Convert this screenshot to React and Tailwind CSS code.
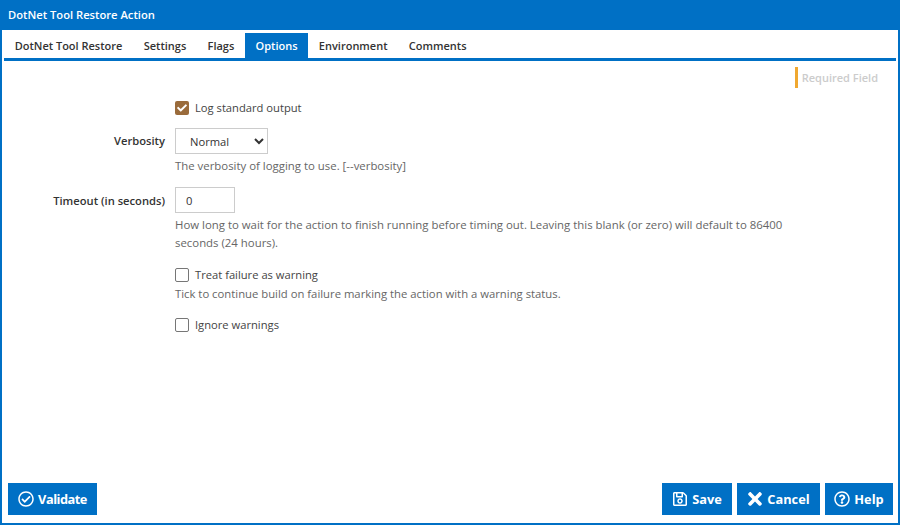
import { FaCheck, FaRegCheckCircle, FaRegQuestionCircle, FaRegSave, FaTimes } from "react-icons/fa";

const tabs = ["DotNet Tool Restore", "Settings", "Flags", "Options", "Environment", "Comments"];

function Check({ checked, children }) {
  return (
    <label className="flex items-center gap-[6px] h-[18px] text-[#444]">
      <span
        className={
          checked
            ? "w-[14px] h-[14px] rounded-[2px] bg-[#9a6b3b] flex items-center justify-center text-white"
            : "w-[14px] h-[14px] rounded-[2px] border border-[#767676] bg-white"
        }
      >
        {checked && <FaCheck className="w-[10px] h-[10px]" />}
      </span>
      {children}
    </label>
  );
}

function Button({ icon, className, children }) {
  return (
    <button className={`h-[32px] bg-[#0070c5] text-white text-[12.8px] font-bold flex items-center justify-center gap-[4px] ${className}`}>
      {icon}
      {children}
    </button>
  );
}

export default function App() {
  return (
    <div className="w-[900px] h-[525px] flex flex-col bg-white overflow-hidden border-x-[2px] border-b-[2px] border-[#0070c5] text-[11.2px] leading-[18px] font-['Open_Sans',sans-serif]">
      {/* Title bar */}
      <div className="h-[30px] -mx-[2px] px-[8px] pb-[1px] shrink-0 flex items-center bg-[#0070c5] text-white font-semibold">
        DotNet Tool Restore Action
      </div>

      {/* Tabs */}
      <div className="mt-[3px] mx-[2px] h-[28px] shrink-0 flex border-b-[3px] border-[#0070c5] text-[11px]">
        {tabs.map((tab) => (
          <div
            key={tab}
            className={
              tab === "Options"
                ? "px-[10.65px] flex items-center font-semibold bg-[#0070c5] text-white"
                : "px-[10.65px] flex items-center font-semibold text-[#333]"
            }
          >
            {tab}
          </div>
        ))}
      </div>

      {/* Required marker */}
      <div className="mt-[6px] mr-[20px] h-[21px] shrink-0 self-end flex items-center border-l-[3px] border-[#f0a830] pl-[4px] text-[11px] text-[#ccc] font-semibold">
        Required Field
      </div>

      {/* Form */}
      <div className="flex-1 mt-[11px] grid grid-cols-[163px_620px] gap-x-[10px] content-start">
        <div />
        <Check checked>Log standard output</Check>

        <div className="mt-[11px] h-[26px] flex items-center justify-end font-semibold text-[#333]">Verbosity</div>
        <div className="mt-[11px]">
          <select className="block w-[93px] h-[26px] pl-[10px] bg-white border border-[#ccc] text-[#333]">
            <option>Normal</option>
          </select>
          <p className="mt-[3px] text-[11.4px] text-[#666]">The verbosity of logging to use. [--verbosity]</p>
        </div>

        <div className="mt-[13px] h-[26px] flex items-center justify-end font-semibold text-[#333]">Timeout (in seconds)</div>
        <div className="mt-[12px]">
          <input
            readOnly
            value="0"
            className="block w-[60px] h-[26px] px-[10px] border border-[#ccc] text-[#333]"
          />
          <p className="mt-[3px] text-[11.4px] text-[#666]">
            How long to wait for the action to finish running before timing out. Leaving this blank (or zero) will default to 86400 seconds (24 hours).
          </p>
        </div>

        <div />
        <div className="mt-[14px]">
          <Check>Treat failure as warning</Check>
          <p className="mt-[1px] text-[11.3px] text-[#666]">Tick to continue build on failure marking the action with a warning status.</p>
        </div>

        <div />
        <div className="mt-[13px]">
          <Check>Ignore warnings</Check>
        </div>
      </div>

      {/* Footer buttons */}
      <div className="h-[40px] shrink-0 pl-[6px] pr-[5px] flex gap-[5px]">
        <Button className="w-[89px] tracking-[-0.5px]" icon={<FaRegCheckCircle className="w-[16px] h-[16px]" />}>Validate</Button>
        <div className="flex-1" />
        <Button className="w-[70px]" icon={<FaRegSave className="w-[16px] h-[16px]" />}>Save</Button>
        <Button className="w-[83px]" icon={<FaTimes className="w-[16px] h-[16px] scale-125" />}>Cancel</Button>
        <Button className="w-[68px]" icon={<FaRegQuestionCircle className="w-[16px] h-[16px]" />}>Help</Button>
      </div>
    </div>
  );
}
